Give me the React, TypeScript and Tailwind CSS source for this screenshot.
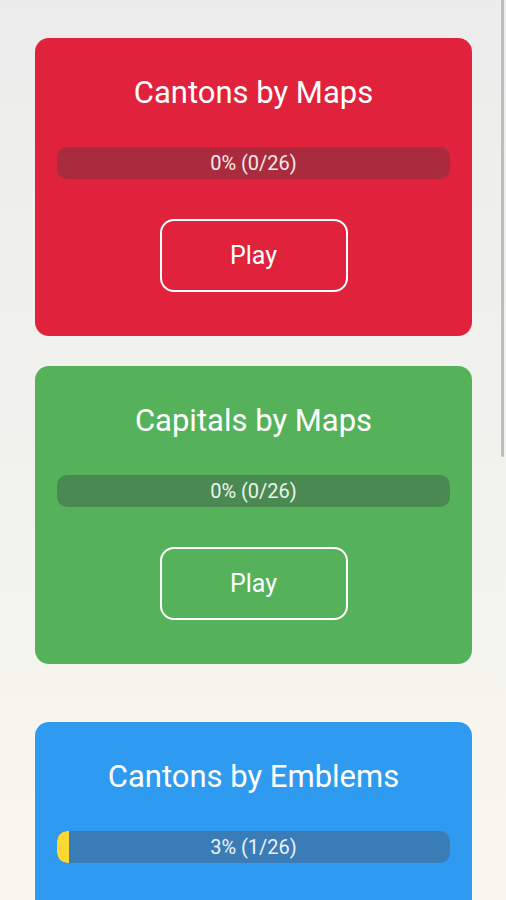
import React from "react";

type CardProps = {
  title: string;
  bg: string;
  track: string;
  label: string;
  pct: number;
};

function Card({ title, bg, track, label, pct }: CardProps) {
  return (
    <div className={`w-[437px] rounded-[14px] flex flex-col items-center pt-[38px] pb-[44px] ${bg}`}>
      <div className="text-white text-[31px] leading-[36px] h-[36px] -mt-[1px] -mb-[1px]">{title}</div>
      <div className={`relative mt-[37px] w-[393px] h-[32px] rounded-[10px] overflow-hidden ${track}`}>
        {pct > 0 && (
          <div className="absolute left-0 top-0 h-full bg-[#fdd835] rounded-l-[10px]" style={{ width: `${pct}px` }} />
        )}
        <div className="relative h-full flex items-center justify-center text-[20px] text-white/90">{label}</div>
      </div>
      <button className="mt-[40px] w-[188px] h-[73px] rounded-[14px] border-2 border-white text-white text-[25px] flex items-center justify-center">
        Play
      </button>
    </div>
  );
}

export default function App() {
  return (
    <div
      className="relative w-[506px] h-[900px] overflow-hidden bg-gradient-to-b from-[#ececec] to-[#f8f8ef]"
      style={{ fontFamily: "Roboto, 'Noto Sans', sans-serif" }}
    >
      <div className="flex flex-col items-center pt-[38px] pl-[1px]">
        <Card title="Cantons by Maps" bg="bg-[#e0223c]" track="bg-[#a92b3d]" label="0% (0/26)" pct={0} />
        <div className="h-[30px]" />
        <Card title="Capitals by Maps" bg="bg-[#55b25a]" track="bg-[#4a8a52]" label="0% (0/26)" pct={0} />
        <div className="h-[58px]" />
        <Card title="Cantons by Emblems" bg="bg-[#2e9bf0]" track="bg-[#3a7cb6]" label="3% (1/26)" pct={12} />
      </div>
      <div className="absolute right-[2px] top-0 w-[3px] h-[457px] bg-[#bdbdbd] rounded-b-sm" />
    </div>
  );
}
